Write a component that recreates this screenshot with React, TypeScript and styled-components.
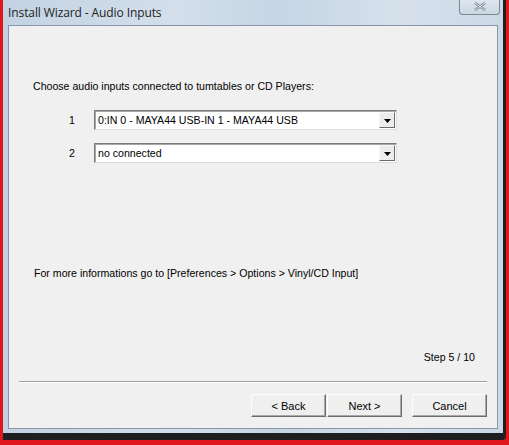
import styled, { createGlobalStyle } from "styled-components";

const GlobalStyle = createGlobalStyle`
  html, body {
    margin: 0;
    padding: 0;
    background: #e0181c;
  }
  body {
    font-family: "Liberation Sans", Arial, sans-serif;
  }
`;

interface ComboProps {
  value: string;
}

const Combo = ({ value }: ComboProps) => (
  <ComboBox>
    <ComboValue>{value}</ComboValue>
    <ComboButton>
      <svg width="7" height="4" viewBox="0 0 7 4">
        <path d="M0 0 H7 L3.5 4 Z" fill="#000" />
      </svg>
    </ComboButton>
  </ComboBox>
);

const inputs = [
  { id: 1, value: "0:IN 0 - MAYA44 USB-IN 1 - MAYA44 USB" },
  { id: 2, value: "no connected" },
];

const App = () => {
  return (
    <>
      <GlobalStyle />
      <Page>
        <Window>
          <TitleBar>
            <Title>Install Wizard - Audio Inputs</Title>
            <CloseButton>
              <svg width="12" height="9" viewBox="0 0 12 9">
                <path
                  d="M1 1 L11 8 M11 1 L1 8"
                  stroke="#6f7d8c"
                  strokeWidth="2.2"
                  fill="none"
                />
                <path
                  d="M1 1 L11 8 M11 1 L1 8"
                  stroke="#f4f7fa"
                  strokeWidth="0.9"
                  fill="none"
                />
              </svg>
            </CloseButton>
          </TitleBar>
          <Client>
            <Intro>Choose audio inputs connected to tumtables or CD Players:</Intro>
            <InputList>
              {inputs.map((input) => (
                <InputRow key={input.id}>
                  <RowLabel>{input.id}</RowLabel>
                  <Combo value={input.value} />
                </InputRow>
              ))}
            </InputList>
            <Info>For more informations go to [Preferences &gt; Options &gt; Vinyl/CD Input]</Info>
            <Step>Step 5 / 10</Step>
            <Separator />
            <ButtonBar>
              <ButtonPair>
                <WizardButton>&lt; Back</WizardButton>
                <WizardButton>Next &gt;</WizardButton>
              </ButtonPair>
              <WizardButton>Cancel</WizardButton>
            </ButtonBar>
          </Client>
        </Window>
      </Page>
    </>
  );
};

const Page = styled.div`
  width: 509px;
  height: 445px;
  padding: 0 0 0 3px;
  box-sizing: border-box;
  overflow: hidden;
`;

const Window = styled.div`
  width: 503px;
  height: 440px;
  box-sizing: border-box;
  display: flex;
  flex-direction: column;
  background: linear-gradient(
    90deg,
    #c3d2e2 0%,
    #d3dfeb 35%,
    #c6d5e4 55%,
    #d6e1ec 80%,
    #cbd8e6 100%
  );
  border-right: 3px solid #1f1f22;
  border-bottom: 7px solid #1e1e20;
  border-bottom-right-radius: 4px;
`;

const TitleBar = styled.div`
  height: 25px;
  display: flex;
  align-items: flex-start;
  justify-content: space-between;
  padding: 0 3px 0 5px;
`;

const Title = styled.div`
  margin-top: 4px;
  font-family: "Open Sans", "Noto Sans", sans-serif;
  font-size: 12px;
  color: #1e1e1e;
  letter-spacing: -0.1px;
`;

const CloseButton = styled.div`
  width: 41px;
  height: 15px;
  box-sizing: border-box;
  border: 1px solid #7c8896;
  border-top: none;
  border-radius: 0 0 4px 4px;
  background: linear-gradient(#dfe6ee, #cbd6e2);
  display: flex;
  align-items: center;
  justify-content: center;
  padding-bottom: 2px;
`;

const Client = styled.div`
  margin: 0 5px 0 5px;
  height: 404px;
  box-sizing: border-box;
  border: 1px solid #8796a8;
  background: #f0f0f0;
  display: flex;
  flex-direction: column;
  font-size: 10.6px;
  color: #000;
`;

const Intro = styled.div`
  margin: 54px 0 0 24px;
  line-height: 13px;
`;

const InputList = styled.div`
  display: flex;
  flex-direction: column;
  gap: 13px;
  margin-top: 17px;
`;

const InputRow = styled.div`
  display: flex;
  align-items: center;
  padding-left: 60px;
`;

const RowLabel = styled.div`
  width: 25px;
  line-height: 13px;
`;

const ComboBox = styled.div`
  width: 303px;
  height: 20px;
  box-sizing: border-box;
  display: flex;
  align-items: stretch;
  background: #fff;
  border: 1px solid;
  border-color: #7a7a7a #dcdcdc #dcdcdc #7a7a7a;
  box-shadow: inset 1px 1px 0 #a8a8a8;
`;

const ComboValue = styled.div`
  flex: 1;
  display: flex;
  align-items: center;
  padding-left: 3px;
`;

const ComboButton = styled.div`
  width: 16px;
  margin: 1px 1px 1px 0;
  box-sizing: border-box;
  background: #ececec;
  border: 1px solid;
  border-color: #f8f8f8 #6a6a6a #6a6a6a #f8f8f8;
  display: flex;
  align-items: center;
  justify-content: center;
  padding-top: 1px;
`;

const Info = styled.div`
  margin: 104px 0 0 25px;
  line-height: 13px;
`;

const Step = styled.div`
  margin: 71px 22px 0 0;
  text-align: right;
  line-height: 13px;
`;

const Separator = styled.div`
  margin: 17px 10px 0 10px;
  height: 1px;
  background: #a0a0a0;
  border-bottom: 1px solid #ffffff;
`;

const ButtonBar = styled.div`
  display: flex;
  justify-content: flex-end;
  gap: 10px;
  margin: 11px 10px 0 0;
`;

const ButtonPair = styled.div`
  display: flex;
  gap: 1px;
`;

const WizardButton = styled.div`
  width: 75px;
  height: 23px;
  box-sizing: border-box;
  display: flex;
  align-items: center;
  justify-content: center;
  background: #efefef;
  border: 1px solid;
  border-color: #fdfdfd #6d6d6d #6d6d6d #fdfdfd;
  box-shadow: inset -1px -1px 0 #a9a9a9;
  font-size: 11px;
`;

export default App;
